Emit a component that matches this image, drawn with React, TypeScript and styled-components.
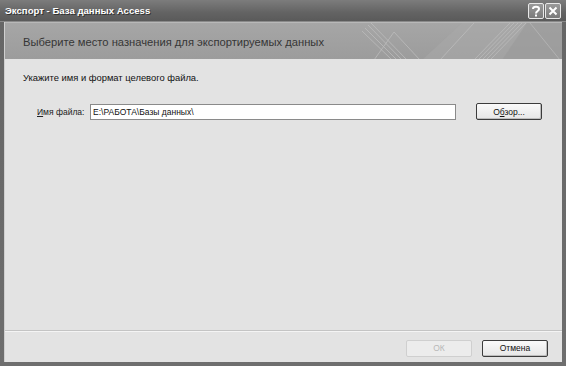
import styled, { createGlobalStyle } from "styled-components"

// Styles
const Global = createGlobalStyle`
  html, body { margin: 0; padding: 0; background: #6a6a6a; }
  * { box-sizing: border-box; }
`
const Window = styled.div`
  width: 566px;
  height: 366px;
  display: flex;
  flex-direction: column;
  background: linear-gradient(#777 0, #666 20px, #6e6e6e 100%);
  font-family: "Liberation Sans", sans-serif;
`
const TitleBar = styled.div`
  height: 22px;
  display: flex;
  align-items: center;
  padding: 0 5px 0 5px;
  background: linear-gradient(#7c7c7c, #636363 60%, #5a5a5a);
  border-bottom: 1px solid #8a8a8a;
`
const Caption = styled.div`
  flex: 1;
  color: #fff;
  font-weight: bold;
  font-size: 9.6px;
  text-shadow: 1px 1px 0 #333;
`
const CapButton = styled.div`
  width: 16px;
  height: 16px;
  margin-left: 1px;
  border: 1px solid #e8e8e8;
  border-radius: 2px;
  background: linear-gradient(#9a9a9a, #7a7a7a);
  display: flex;
  align-items: center;
  justify-content: center;
`
const Frame = styled.div`
  flex: 1;
  margin: 0 4px 4px 4px;
  display: flex;
  flex-direction: column;
  background: #e3e3e3;
  border-left: 1px solid #cfcfcf;
`
const Header = styled.div`
  position: relative;
  height: 37px;
  background: linear-gradient(#a6a6a6, #9c9c9c);
  border-top: 1px solid #b8b8b8;
  display: flex;
  align-items: center;
  padding-left: 18px;
  overflow: hidden;
`
const Decor = styled.svg`
  position: absolute;
  right: 0;
  top: 0;
`
const HeaderText = styled.div`
  position: relative;
  font-size: 11.2px;
  color: #363636;
  padding-top: 2px;
`
const Body = styled.div`
  flex: 1;
  padding: 14px 0 0 18px;
  font-size: 8.5px;
  color: #111;
`
const Hint = styled.div`
  height: 10px;
  line-height: 10px;
  font-size: 9.4px;
  margin-bottom: 20px;
`
const FileRow = styled.div`
  display: flex;
  align-items: center;
  padding-left: 14px;
`
const Label = styled.span`
  width: 53px;
  flex-shrink: 0;
  white-space: nowrap;
  color: #222;
`
const Input = styled.div`
  width: 366px;
  height: 16px;
  border: 1px solid #8a8a8a;
  background: #fff;
  padding: 1px 2px;
  line-height: 12px;
  white-space: nowrap;
`
const Button = styled.div<{ $disabled?: boolean; $w: number }>`
  width: ${p => p.$w}px;
  height: 17px;
  display: flex;
  align-items: center;
  justify-content: center;
  font-size: 8.5px;
  border-radius: 2px;
  color: ${p => (p.$disabled ? "#b8b8b8" : "#111")};
  border: 1px solid ${p => (p.$disabled ? "#cfcfcf" : "#3c3c3c")};
  background: ${p => (p.$disabled ? "#ececec" : "linear-gradient(#fafafa, #e6e6e6)")};
  box-shadow: ${p => (p.$disabled ? "none" : "inset -1px -1px 0 #bdbdbd")};
`
const Browse = styled(Button)`
  margin-left: 20px;
`
const Separator = styled.div`
  height: 2px;
  border-top: 1px solid #c4c4c4;
  border-bottom: 1px solid #f4f4f4;
`
const Footer = styled.div`
  height: 30px;
  display: flex;
  align-items: center;
  justify-content: flex-end;
  gap: 10px;
  padding: 2px 14px 0 0;
`

const App: React.FC = () => {
  return (
    <Window>
      <Global />
      <TitleBar>
        <Caption>Экспорт - База данных Access</Caption>
        <CapButton>
          <svg width="10" height="12" viewBox="0 0 10 12">
            <path d="M2 4 C2 1 8 1 8 4 C8 6 5 6 5 8.5" fill="none" stroke="#fff" strokeWidth="2" />
            <rect x="4" y="9.5" width="2" height="2" fill="#fff" />
          </svg>
        </CapButton>
        <CapButton>
          <svg width="10" height="10" viewBox="0 0 10 10">
            <path d="M1.5 1.5 L8.5 8.5 M8.5 1.5 L1.5 8.5" stroke="#fff" strokeWidth="2" />
          </svg>
        </CapButton>
      </TitleBar>
      <Frame>
        <Header>
          <Decor width="200" height="37" viewBox="0 0 200 37">
            <polygon points="60,37 100,0 200,0 200,37" fill="#a9a9a9" opacity="0.5" />
            <polygon points="140,37 165,0 200,0 200,37" fill="#9a9a9a" opacity="0.6" />
            <g stroke="#bdbdbd" strokeWidth="0.8" fill="none">
              <path d="M0 8 L30 37" />
              <path d="M3 5 L35 37" />
              <path d="M6 2 L40 37" />
              <path d="M9 0 L45 37" />
              <path d="M12 37 L32 9 L58 37" />
              <path d="M78 37 L112 0" />
              <path d="M112 37 L148 0" />
              <path d="M116 37 L152 0" />
              <path d="M120 37 L156 0" />
              <path d="M124 37 L160 0" />
              <path d="M128 37 L164 0" />
            </g>
            <path d="M168 0 L198 37" stroke="#b2b2b2" strokeWidth="1" />
          </Decor>
          <HeaderText>Выберите место назначения для экспортируемых данных</HeaderText>
        </Header>
        <Body>
          <Hint>Укажите имя и формат целевого файла.</Hint>
          <FileRow>
            <Label><u>И</u>мя файла:</Label>
            <Input>E:\РАБОТА\Базы данных\</Input>
            <Browse $w={66}><span>О<u>б</u>зор...</span></Browse>
          </FileRow>
        </Body>
        <Separator />
        <Footer>
          <Button $disabled $w={66}>ОК</Button>
          <Button $w={66}>Отмена</Button>
        </Footer>
      </Frame>
    </Window>
  )
}

export default App
